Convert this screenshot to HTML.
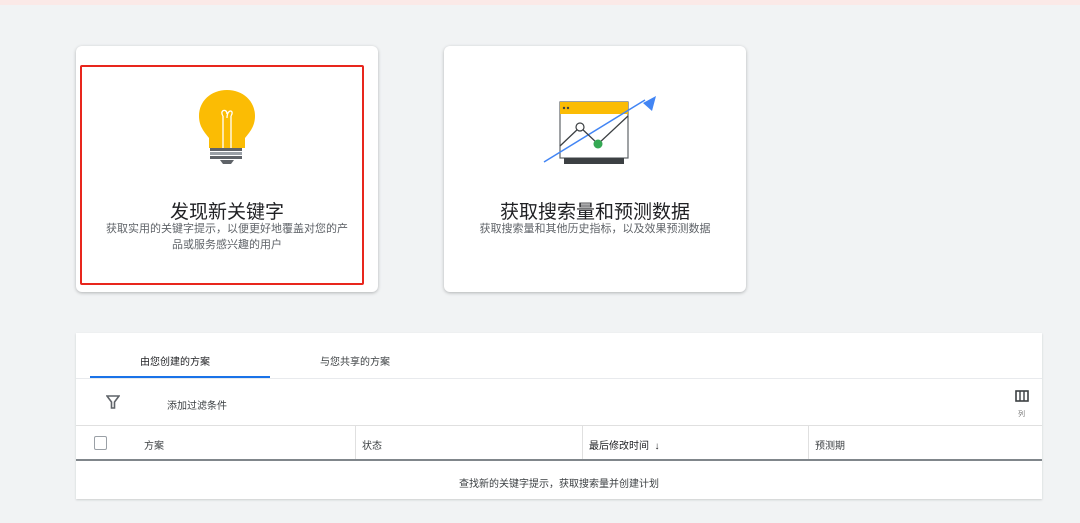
<!DOCTYPE html><html><head><meta charset="utf-8"><style>
body{margin:0;width:1080px;height:523px;background:#f1f3f4;font-family:"Liberation Sans","Noto Sans CJK SC",sans-serif;position:relative;overflow:hidden;color:#3c4043}
.top{position:absolute;left:0;top:0;width:1080px;height:5px;background:#fbe9e7}
.card{position:absolute;top:46px;width:302px;height:246px;background:#fff;border-radius:6px;box-shadow:0 1px 3px rgba(60,64,67,.35)}
.t{position:absolute;left:0;width:100%;text-align:center}
.h{top:151px;font-size:19px;color:#202124}
.d{font-size:11px;color:#5f6368;line-height:16px;top:175px;padding:0 8px;box-sizing:border-box;white-space:nowrap}
.panel{position:absolute;left:76px;top:333px;width:966px;height:166px;background:#fff;box-shadow:0 1px 2px rgba(60,64,67,.2)}
.s{position:absolute;font-size:10px;color:#3c4043;white-space:nowrap}
</style></head><body>
<div class="top"></div>
<div class="card" style="left:76px">
<div style="position:absolute;left:4px;top:19px;width:280px;height:216px;border:2px solid #e8261d;border-radius:2px"></div>
<svg style="position:absolute;left:120px;top:42px" width="62" height="80" viewBox="0 0 62 80">
<path d="M31 2C15 2 3 13 3 28c0 10 5 16 10 22v10h36V50c5-6 10-12 10-22C59 13 47 2 31 2z" fill="#fbbc04"/>
<path d="M27 60V28M35 60V28M27 28c-4-6 4-8 4-2M35 28c4-6-4-8-4 2" stroke="#fff" stroke-width="1.3" fill="none"/>
<rect x="14" y="60" width="32" height="3" fill="#5f6368"/><rect x="14" y="64" width="32" height="3" fill="#9aa0a6"/><rect x="14" y="68" width="32" height="3" fill="#5f6368"/>
<path d="M24 72h14l-3 4h-8z" fill="#5f6368"/></svg>
<div class="t h">发现新关键字</div>
<div class="t d">获取实用的关键字提示，以便更好地覆盖对您的产<br>品或服务感兴趣的用户</div>
</div>
<div class="card" style="left:444px">
<svg style="position:absolute;left:98px;top:50px" width="116" height="70" viewBox="0 0 116 70">
<rect x="18" y="6" width="68" height="56" fill="#fff" stroke="#5f6368" stroke-width="1.2"/>
<rect x="18" y="6" width="68" height="12" fill="#fbbc04"/>
<circle cx="22" cy="12" r="1.2" fill="#3c4043"/><circle cx="26" cy="12" r="1.2" fill="#3c4043"/>
<rect x="22" y="62" width="60" height="6" fill="#3c4043"/>
<path d="M2 66L103 4" stroke="#4285f4" stroke-width="1.5"/><path d="M114 0l-4 15-9-8z" fill="#4285f4"/>
<path d="M18 50L38 31L56 48L86 20" stroke="#3c4043" stroke-width="1.3" fill="none"/>
<circle cx="38" cy="31" r="4" fill="#fff" stroke="#3c4043" stroke-width="1.2"/><circle cx="56" cy="48" r="4.5" fill="#34a853"/></svg>
<div class="t h">获取搜索量和预测数据</div>
<div class="t d">获取搜索量和其他历史指标，以及效果预测数据</div>
</div>
<div class="panel">
<div class="s" style="left:64px;top:20px;color:#202124">由您创建的方案</div>
<div class="s" style="left:244px;top:20px">与您共享的方案</div>
<div style="position:absolute;left:14px;top:43px;width:180px;height:2px;background:#1a73e8"></div>
<div style="position:absolute;left:0;top:45px;width:966px;height:1px;background:#e8eaed"></div>
<svg style="position:absolute;left:30px;top:62px" width="14" height="14" viewBox="0 0 14 14"><path d="M1 1h12L8.5 7v6h-3V7z" fill="none" stroke="#5f6368" stroke-width="1.6"/></svg>
<div class="s" style="left:91px;top:64px">添加过滤条件</div>
<svg style="position:absolute;left:939px;top:57px" width="14" height="12"><rect x="1" y="1" width="12" height="10" fill="none" stroke="#3c4043" stroke-width="1.6"/><path d="M5 1v10M9 1v10" stroke="#3c4043" stroke-width="1.4"/></svg>
<div class="s" style="left:942px;top:76px;font-size:7px;color:#777">列</div>
<div style="position:absolute;left:0;top:92px;width:966px;height:1px;background:#e0e0e0"></div>
<div style="position:absolute;left:18px;top:103px;width:11px;height:12px;border:1px solid #9aa0a6;border-radius:2px"></div>
<div class="s" style="left:68px;top:104px">方案</div>
<div class="s" style="left:286px;top:104px">状态</div>
<div class="s" style="left:513px;top:104px;color:#202124">最后修改时间 &nbsp;↓</div>
<div class="s" style="left:739px;top:104px">预测期</div>
<div style="position:absolute;left:279px;top:93px;width:1px;height:33px;background:#e0e0e0"></div>
<div style="position:absolute;left:506px;top:93px;width:1px;height:33px;background:#e0e0e0"></div>
<div style="position:absolute;left:732px;top:93px;width:1px;height:33px;background:#e0e0e0"></div>
<div style="position:absolute;left:0;top:126px;width:966px;height:2px;background:#80868b"></div>
<div class="s" style="left:0;width:966px;text-align:center;top:142px">查找新的关键字提示，获取搜索量并创建计划</div>
</div>
</body></html>
